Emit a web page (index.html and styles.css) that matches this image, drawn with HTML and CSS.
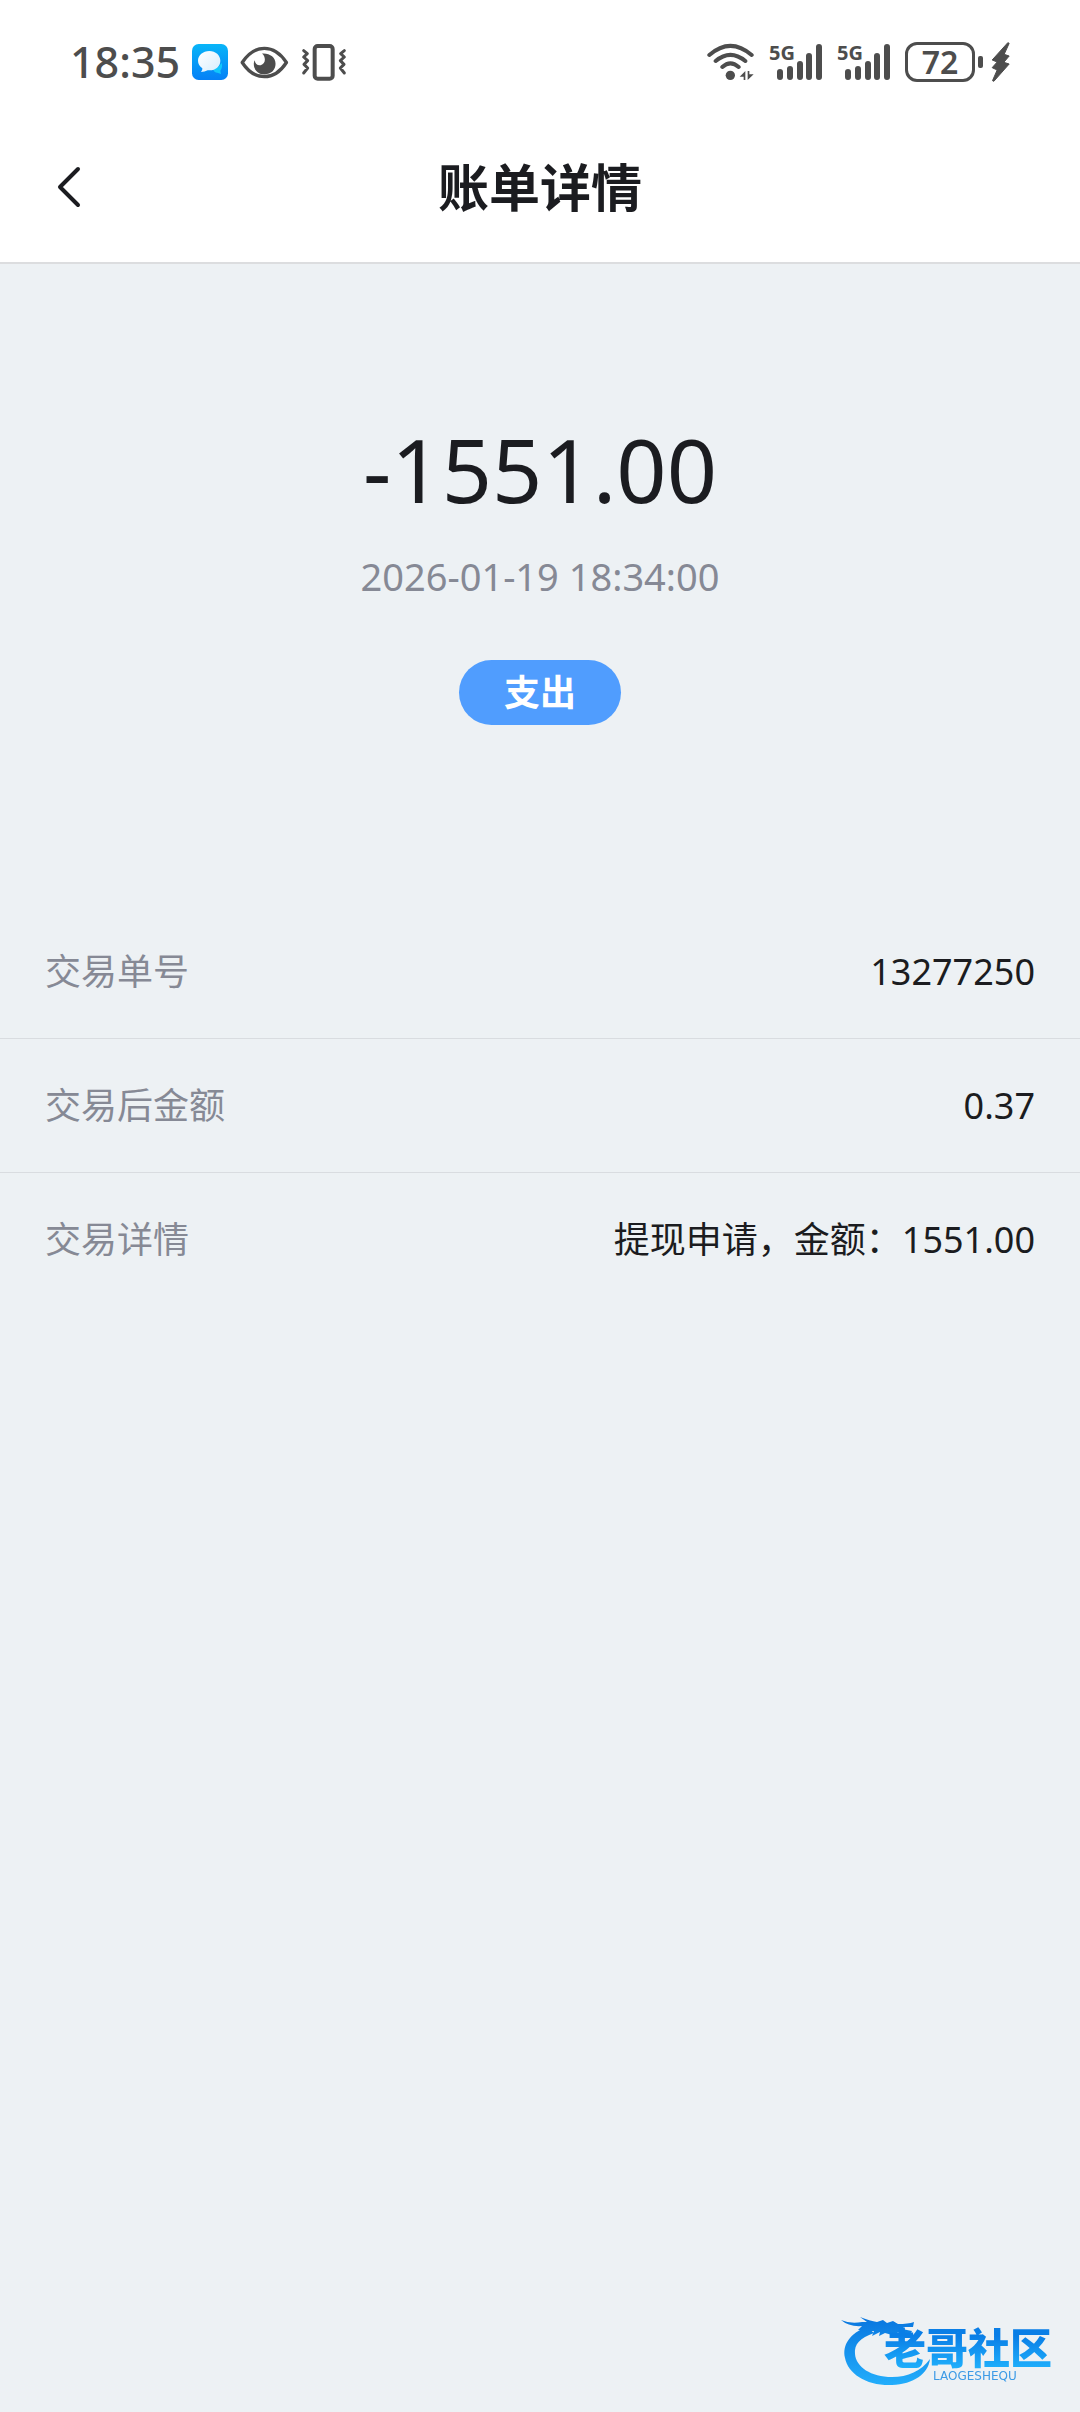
FILE: index.html
```html
<!DOCTYPE html>
<html lang="zh-CN">
<head>
    <meta charset="UTF-8">
    <meta name="viewport" content="width=device-width, initial-scale=1.0">
    <title>账单详情</title>
    <link rel="stylesheet" href="styles.css">
</head>
<body>
  <!-- status bar -->
  <div class="status_bar">
    <div class="status_left">
      <span class="clock">18:35</span>
      <svg class="app_icon" viewBox="0 0 108 108" width="36" height="36" aria-hidden="true">
        <defs>
          <linearGradient id="app_bg" x1="0" y1="0" x2="0" y2="1">
            <stop offset="0" stop-color="#08b5f8"/>
            <stop offset="1" stop-color="#0580f6"/>
          </linearGradient>
          <linearGradient id="app_bubble" x1="0" y1="0" x2="1" y2="1">
            <stop offset="0" stop-color="#fff"/>
            <stop offset="1" stop-color="#d5edfd"/>
          </linearGradient>
        </defs>
        <rect width="108" height="108" rx="20" fill="url(#app_bg)"/>
        <path d="M62 76 Q82 72 88 56 Q94 66 85 80 L87 90 L76 86 Q68 87 62 76Z" fill="#12c8fb"/>
        <path d="M52 21 C71 21 85 34 85 50 C85 67 71 79 53 79 L47 79 Q38 84 27 84 Q32 78 31 73 C23 67 18 60 18 50 C18 34 33 21 52 21Z" fill="url(#app_bubble)"/>
      </svg>
      <svg viewBox="573 76 147 100" width="49" height="33" aria-hidden="true">
        <path d="M579 126 Q607 83 646 83 Q685 83 713 126 Q685 169 646 169 Q607 169 579 126Z" fill="none" stroke="#4d4d4d" stroke-width="10" stroke-linejoin="round"/>
        <path d="M639 99 C662 97 680 110 680 130 C680 149 666 162 647 162 C628 162 614 149 614 130 C614 126 615 122 617 119 C618 130 626 136 635 134 C650 131 652 110 639 99Z" fill="#4d4d4d"/>
      </svg>
      <svg viewBox="761 71 138 111" width="46" height="37" aria-hidden="true">
        <rect x="802" y="77" width="54" height="98" rx="9" fill="none" stroke="#4d4d4d" stroke-width="12"/>
        <path d="M769 91 L780 100 L769 110 L781 121 L770 132 L781 143 L769 158 M891 91 L880 100 L891 110 L879 121 L890 132 L879 143 L891 158" fill="none" stroke="#4d4d4d" stroke-width="9" stroke-linecap="round" stroke-linejoin="round"/>
      </svg>
    </div>
    <div class="status_right">
      <svg class="wifi" viewBox="54 69 144 114" width="48" height="38" aria-hidden="true">
        <path d="M61 105 Q124 50 188 105 M80 123 Q124 86 169 123 M100 141 Q124 119 149 141" fill="none" stroke="#4d4d4d" stroke-width="12" stroke-linecap="round"/>
        <circle cx="124" cy="166" r="14" fill="#4d4d4d"/>
        <path d="M152 170 L169 153 L169 180 L164 180 L164 170Z M176 180 L176 153 L181 153 L181 163 L194 163Z" fill="#4d4d4d"/>
      </svg>
      <svg class="signal" viewBox="0 -8 54 54" width="54" height="54" role="img" aria-label="5G">
        <text x="0" y="17" class="net">5G</text>
        <path d="M11 29V34 M21 26V34 M31 21V34 M40 13V34 M50 4V34" stroke="#4d4d4d" stroke-width="6" stroke-linecap="round"/>
      </svg>
      <svg class="signal" viewBox="0 -8 54 54" width="54" height="54" role="img" aria-label="5G">
        <text x="0" y="17" class="net">5G</text>
        <path d="M11 29V34 M21 26V34 M31 21V34 M40 13V34 M50 4V34" stroke="#4d4d4d" stroke-width="6" stroke-linecap="round"/>
      </svg>
      <div class="battery"><span class="battery_level">72</span></div>
      <svg class="bolt" viewBox="900 66 56 120" width="19" height="40" aria-hidden="true">
        <path d="M950 68 L903 120 L918 126 L903 143 L918 150 L904 182 L908 184 L954 132 L938 127 L954 108 L939 103 L954 70Z" fill="#4d4d4d" stroke="#4d4d4d" stroke-width="3" stroke-linejoin="round"/>
      </svg>
    </div>
  </div>

  <header class="nav">
    <button type="button" class="back" aria-label="返回">
      <svg viewBox="0 0 26 44" width="26" height="44" aria-hidden="true">
        <path d="M23 4 L5 22 L23 40" fill="none" stroke="#1b1c20" stroke-width="4" stroke-linecap="round" stroke-linejoin="round"/>
      </svg>
    </button>
    <h1 class="title">账单详情</h1>
  </header>

  <main>
    <section class="summary">
      <p class="amount">-1551.00</p>
      <p class="time">2026-01-19 18:34:00</p>
      <span class="tag">支出</span>
    </section>

    <dl class="detail">
      <div class="row">
        <dt>交易单号</dt>
        <dd>13277250</dd>
      </div>
      <div class="row">
        <dt>交易后金额</dt>
        <dd>0.37</dd>
      </div>
      <div class="row">
        <dt>交易详情</dt>
        <dd>提现申请，金额：1551.00</dd>
      </div>
    </dl>
  </main>

  <!-- community logo -->
  <svg class="logo" viewBox="0 0 260 112" width="260" height="112" role="img" aria-label="老哥社区">
    <defs>
      <linearGradient id="logo_blue" gradientUnits="userSpaceOnUse" x1="0" y1="20" x2="0" y2="84">
        <stop offset="0" stop-color="#0a78e0"/>
        <stop offset="1" stop-color="#22adfb"/>
      </linearGradient>
      <linearGradient id="logo_text" gradientUnits="userSpaceOnUse" x1="0" y1="36" x2="0" y2="70">
        <stop offset="0" stop-color="#0a7ee6"/>
        <stop offset="1" stop-color="#20b2fd"/>
      </linearGradient>
    </defs>
    <!-- tail -->
    <path d="M47 27 C30 33 22 45 25 58 C28 74 47 86 72 85 C94 84 108 74 110 59 C101 71 88 77 72 77 C51 77 36 67 35 54 C34 44 40 38 54 33Z" fill="url(#logo_blue)"/>
    <!-- head and horns -->
    <path d="M21 20 Q30 24 42 22 L47 22 L40 17 Q50 21 57 22 L63 20 L67 23 L73 21 L78 24 Q88 24 94 22 L93 27 L84 27 L82 29 L92 31 L90 35 L79 32 L72 35 L65 33 L59 36 L60 32 L52 36 L54 31 L46 31 L38 30 L42 26 Q29 27 21 20Z" fill="url(#logo_blue)"/>
    <text x="64" y="64" class="logo_name">老哥社区</text>
    <text x="113" y="80" class="logo_latin">LAOGESHEQU</text>
  </svg>
</body>
</html>
```

FILE: styles.css
```css
* {
  box-sizing: border-box;
}
body {
  margin: 0;
  min-height: 100vh;
  background: #edf1f4;
  color: #1b1c20;
  font-family: "Noto Sans", "Noto Sans CJK SC", sans-serif;
  font-size: 36px;
}
h1, p, dl, dd {
  margin: 0;
}
svg {
  display: block;
}

/* status bar */
.status_bar {
  display: flex;
  justify-content: space-between;
  align-items: center;
  height: 112px;
  padding: 12px 70px 0 70px;
  background: #fff;
  color: #4d4d4d;
}
.status_left,
.status_right {
  display: flex;
  align-items: center;
  gap: 14px;
}
.status_left {
  gap: 12px;
}
.clock {
  font-size: 43px;
  font-weight: 500;
  line-height: 60px;
}
.net {
  font-family: "Noto Sans", sans-serif;
  font-size: 20px;
  font-weight: 700;
  fill: #4d4d4d;
}
.battery {
  position: relative;
  width: 70px;
  height: 40px;
  margin-right: 2px;
  border: 3px solid #4d4d4d;
  border-radius: 12px;
  text-align: center;
}
.battery::after {
  content: "";
  position: absolute;
  top: 11px;
  right: -11px;
  width: 5px;
  height: 12px;
  border-radius: 2px;
  background: #4d4d4d;
}
.battery_level {
  display: block;
  font-size: 32px;
  font-weight: 600;
  line-height: 34px;
}

/* title bar */
.nav {
  display: grid;
  grid-template-columns: 1fr auto 1fr;
  align-items: center;
  height: 152px;
  padding: 0 45px;
  background: #fff;
  border-bottom: 2px solid #dcdddf;
}
.back {
  justify-self: start;
  padding: 10px;
  border: 0;
  background: none;
  cursor: pointer;
}
.title {
  font-size: 51px;
  font-weight: 700;
  line-height: 72px;
}

/* amount */
.summary {
  display: flex;
  flex-direction: column;
  align-items: center;
  padding: 155px 45px 180px;
}
.amount {
  font-size: 88px;
  line-height: 100px;
}
.time {
  margin-top: 30px;
  color: #868995;
  font-size: 38px;
  line-height: 54px;
}
.tag {
  margin-top: 57px;
  padding: 0 45px;
  border-radius: 33px;
  background: #509dfe;
  color: #fff;
  font-weight: 700;
  line-height: 65px;
}

/* detail list */
.row {
  display: flex;
  justify-content: space-between;
  align-items: center;
  padding: 40px 45px;
  border-bottom: 1px solid #d9dce0;
  line-height: 53px;
}
.row:last-child {
  border-bottom: 0;
}
.row dt {
  color: #868995;
}

.logo {
  position: fixed;
  right: 0;
  bottom: 0;
}
.logo_name {
  font-family: "Noto Sans CJK SC", sans-serif;
  font-size: 42px;
  font-weight: 900;
  fill: url(#logo_text);
}
.logo_latin {
  font-family: "DejaVu Sans", sans-serif;
  font-size: 12px;
  fill: #3d9be6;
}
```
